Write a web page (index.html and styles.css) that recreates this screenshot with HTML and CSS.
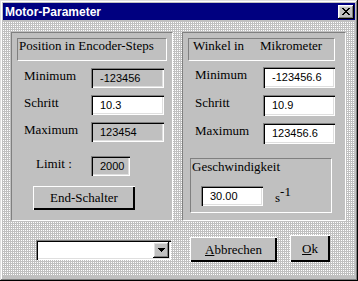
FILE: index.html
```html
<!DOCTYPE html>
<html>
<head>
    <title>Motor-Parameter</title>
    <link rel="stylesheet" href="styles.css">
</head>
<body>
    <div class="window">
        <div class="titlebar">
            <span class="title">Motor-Parameter</span>
            <span class="close-btn">
                <svg width="8" height="7" viewBox="0 0 8 7" shape-rendering="crispEdges">
                    <path d="M0 0h2v1h-2zM6 0h2v1h-2zM1 1h2v1h-2zM5 1h2v1h-2zM2 2h4v1h-4zM3 3h2v1h-2zM2 4h4v1h-4zM1 5h2v1h-2zM5 5h2v1h-2zM0 6h2v1h-2zM6 6h2v1h-2z" fill="#000"/>
                </svg>
            </span>
        </div>

        <div class="client">
            <div class="panels">
                <!-- Encoder steps -->
                <div class="panel panel-left">
                    <div class="caption">Position in Encoder-Steps</div>
                    <div class="row first-row">
                        <span class="label">Minimum</span>
                        <span class="field readonly">-123456</span>
                    </div>
                    <div class="row">
                        <span class="label">Schritt</span>
                        <span class="field">10.3</span>
                    </div>
                    <div class="row">
                        <span class="label">Maximum</span>
                        <span class="field readonly">123454</span>
                    </div>
                    <div class="row limit-row">
                        <span class="label">Limit :</span>
                        <span class="field readonly limit-field">2000</span>
                    </div>
                    <button class="btn end-btn">End-Schalter</button>
                </div>

                <!-- Angle in micrometer -->
                <div class="panel panel-right">
                    <div class="caption"><span class="caption-first">Winkel in</span>Mikrometer</div>
                    <div class="row first-row">
                        <span class="label">Minimum</span>
                        <span class="field">-123456.6</span>
                    </div>
                    <div class="row">
                        <span class="label">Schritt</span>
                        <span class="field">10.9</span>
                    </div>
                    <div class="row">
                        <span class="label">Maximum</span>
                        <span class="field">123456.6</span>
                    </div>
                    <div class="speed-box">
                        <div class="speed-title">Geschwindigkeit</div>
                        <div class="speed-row">
                            <span class="field speed-field">30.00</span>
                            <span class="unit">s<sup>-1</sup></span>
                        </div>
                    </div>
                </div>
            </div>

            <div class="actions">
                <div class="combo">
                    <span class="combo-btn">
                        <svg width="7" height="4" viewBox="0 0 7 4" shape-rendering="crispEdges">
                            <path d="M0 0h7v1h-7zM1 1h5v1h-5zM2 2h3v1h-3zM3 3h1v1h-1z" fill="#000"/>
                        </svg>
                    </span>
                </div>
                <button class="btn cancel-btn"><u>A</u>bbrechen</button>
                <button class="btn ok-btn"><u>O</u>k</button>
            </div>
        </div>
    </div>
</body>
</html>
```

FILE: styles.css
```css
* {
    box-sizing: border-box;
}

body {
    margin: 0;
    font-family: "Liberation Serif", "Times New Roman", serif;
    font-size: 13px;
    color: #000;
}

.window {
    width: 358px;
    height: 281px;
    padding: 3px;
    background-color: #c0c0c0;
    box-shadow: inset -1px -1px #000, inset 1px 1px #dfdfdf, inset -2px -2px #808080, inset 2px 2px #fff;
}

.titlebar {
    height: 17px;
    background-color: #000080;
    color: #fff;
    display: flex;
    align-items: center;
    justify-content: space-between;
    padding: 0 1px 0 2px;
}

.title {
    font-family: "Liberation Sans", Arial, sans-serif;
    font-weight: bold;
    font-size: 12px;
    line-height: 14px;
}

.close-btn {
    width: 16px;
    height: 14px;
    background-color: #c0c0c0;
    display: flex;
    align-items: center;
    justify-content: center;
    padding-right: 1px;
    box-shadow: inset -1px -1px #000, inset 1px 1px #fff, inset -2px -2px #808080, inset 2px 2px #dfdfdf;
}

/* dotted dialog background */
.client {
    margin-top: 2px;
    height: 254px;
    padding: 10px 8px 0 8px;
    background-color: #c0c0c0;
    background-image: conic-gradient(at 1px 1px, #c0c0c0 75%, #fff 0);
    background-size: 2px 2px;
}

.panels {
    display: flex;
    gap: 9px;
}

.panel {
    height: 189px;
    padding: 5px;
    background-color: #c0c0c0;
    border: 1px solid;
    border-color: #808080 #fff #fff #808080;
}

.panel-left {
    width: 162px;
}

.panel-right {
    width: 164px;
}

.caption {
    height: 23px;
    line-height: 14px;
    padding: 0 0 0 1px;
    border: 1px solid;
    border-color: #808080 #fff #fff #808080;
    white-space: nowrap;
}

.panel-left .caption {
    width: 150px;
}

.panel-right .caption {
    width: 147px;
    padding-left: 4px;
}

.caption-first {
    display: inline-block;
    width: 67px;
}

.row {
    display: flex;
    align-items: flex-start;
    margin-top: 7px;
}

.first-row {
    margin-top: 7px;
}

.panel-right .first-row {
    margin-top: 6px;
}

.label {
    width: 67px;
    margin-left: 7px;
    margin-top: 1px;
    line-height: 14px;
}

.panel-right .label {
    width: 68px;
}

.field {
    display: block;
    width: 73px;
    height: 20px;
    padding: 3px 0 0 9px;
    background-color: #fff;
    font-family: "Liberation Sans", Arial, sans-serif;
    font-size: 11px;
    line-height: 14px;
    box-shadow: inset 1px 1px #808080, inset 2px 2px #000, inset -1px -1px #fff, inset -2px -2px #dfdfdf;
}

.panel-right .field {
    width: 72px;
    height: 21px;
}

.readonly {
    background-color: #c0c0c0;
}

.limit-row {
    margin-top: 14px;
}

.limit-row .label {
    margin-left: 19px;
    width: 55px;
}

.limit-field {
    width: 39px;
}

.btn {
    display: block;
    padding: 0;
    border: none;
    background-color: #c0c0c0;
    font-family: "Liberation Serif", "Times New Roman", serif;
    font-size: 13px;
    color: #000;
    box-shadow: inset 1px 1px #fff, inset -2px -2px #000;
}

.end-btn {
    width: 102px;
    height: 24px;
    margin: 10px 0 0 16px;
}

.speed-box {
    width: 142px;
    height: 55px;
    margin: 14px 0 0 2px;
    border: 1px solid;
    border-color: #808080 #fff #fff #808080;
}

.speed-title {
    padding: 1px 0 0 1px;
    line-height: 14px;
}

.speed-row {
    display: flex;
    align-items: flex-start;
    margin: 12px 0 0 10px;
}

.panel-right .speed-field {
    width: 62px;
    height: 20px;
}

.unit {
    margin: 5px 0 0 12px;
    line-height: 14px;
}

.unit sup {
    font-size: 13px;
    vertical-align: 6px;
    line-height: 0;
}

.actions {
    display: flex;
    align-items: flex-end;
    margin-top: 14px;
}

.combo {
    width: 135px;
    height: 20px;
    margin: 0 0 2px 25px;
    padding: 2px;
    display: flex;
    justify-content: flex-end;
    background-color: #fff;
    box-shadow: inset 1px 1px #808080, inset 2px 2px #000, inset -1px -1px #fff, inset -2px -2px #dfdfdf;
}

.combo-btn {
    width: 16px;
    height: 16px;
    display: flex;
    align-items: center;
    justify-content: center;
    background-color: #c0c0c0;
    box-shadow: inset -1px -1px #000, inset 1px 1px #fff, inset -2px -2px #808080, inset 2px 2px #dfdfdf;
}

.cancel-btn {
    width: 87px;
    height: 25px;
    margin-left: 19px;
}

.ok-btn {
    width: 40px;
    height: 27px;
    margin-left: 13px;
}
```
